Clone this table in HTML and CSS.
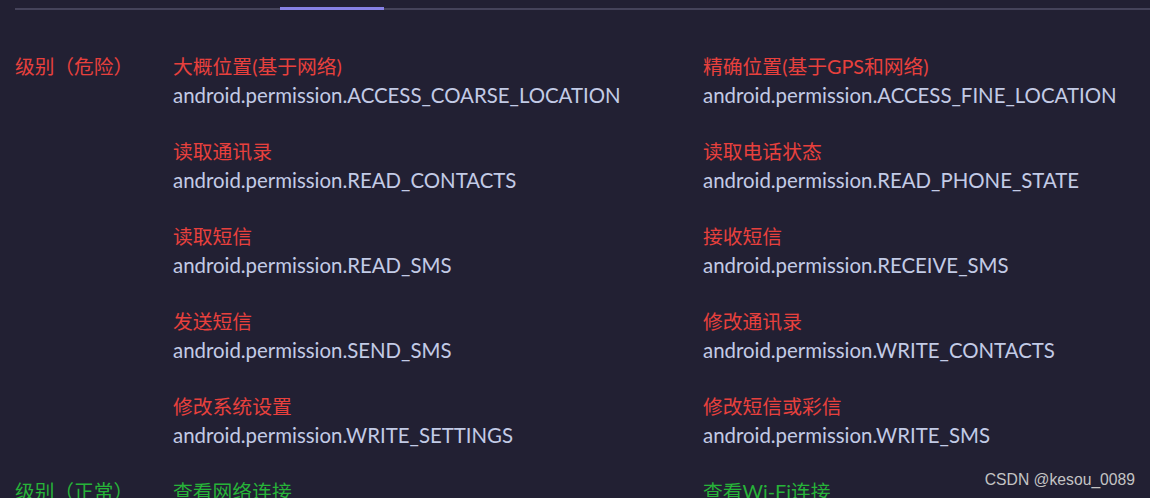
FILE: index.html
```html
<!DOCTYPE html>
<html lang="zh-CN">
<head>
  <meta charset="UTF-8">
  <meta name="viewport" content="width=device-width, initial-scale=1.0">
  <title>权限列表</title>
  <link rel="stylesheet" href="styles.css">
</head>
<body>
  <div class="tab-bar">
    <div class="tab-active"></div>
  </div>

  <div class="levels">
    <!-- 危险权限 -->
    <div class="level danger">
      <div class="level-name">级别（危险）</div>
      <div class="perm-list">
        <div class="perm">
          <div class="perm-title">大概位置(基于网络)</div>
          <div class="perm-name">android.permission.ACCESS_COARSE_LOCATION</div>
        </div>
        <div class="perm">
          <div class="perm-title">精确位置(基于GPS和网络)</div>
          <div class="perm-name">android.permission.ACCESS_FINE_LOCATION</div>
        </div>
        <div class="perm">
          <div class="perm-title">读取通讯录</div>
          <div class="perm-name">android.permission.READ_CONTACTS</div>
        </div>
        <div class="perm">
          <div class="perm-title">读取电话状态</div>
          <div class="perm-name">android.permission.READ_PHONE_STATE</div>
        </div>
        <div class="perm">
          <div class="perm-title">读取短信</div>
          <div class="perm-name">android.permission.READ_SMS</div>
        </div>
        <div class="perm">
          <div class="perm-title">接收短信</div>
          <div class="perm-name">android.permission.RECEIVE_SMS</div>
        </div>
        <div class="perm">
          <div class="perm-title">发送短信</div>
          <div class="perm-name">android.permission.SEND_SMS</div>
        </div>
        <div class="perm">
          <div class="perm-title">修改通讯录</div>
          <div class="perm-name">android.permission.WRITE_CONTACTS</div>
        </div>
        <div class="perm">
          <div class="perm-title">修改系统设置</div>
          <div class="perm-name">android.permission.WRITE_SETTINGS</div>
        </div>
        <div class="perm">
          <div class="perm-title">修改短信或彩信</div>
          <div class="perm-name">android.permission.WRITE_SMS</div>
        </div>
      </div>
    </div>

    <!-- 普通权限 -->
    <div class="level normal">
      <div class="level-name">级别（正常）</div>
      <div class="perm-list">
        <div class="perm">
          <div class="perm-title">查看网络连接</div>
          <div class="perm-name">android.permission.ACCESS_NETWORK_STATE</div>
        </div>
        <div class="perm">
          <div class="perm-title">查看Wi-Fi连接</div>
          <div class="perm-name">android.permission.ACCESS_WIFI_STATE</div>
        </div>
      </div>
    </div>
  </div>

  <div class="watermark">CSDN @kesou_0089</div>
</body>
</html>
```

FILE: styles.css
```css
body {
  margin: 0;
  padding: 0 0 0 15px;
  background-color: #222033;
  font-family: Lato, "Noto Sans CJK SC", sans-serif;
  overflow: hidden;
  height: 498px;
}
.tab-bar {
  display: flex;
  align-items: flex-end;
  height: 8px;
  border-bottom: 2px solid #45435a;
}
.tab-active {
  margin-left: 265px;
  margin-bottom: -2px;
  width: 104px;
  height: 3px;
  background-color: #8781e6;
}
.levels {
  display: flex;
  flex-direction: column;
  gap: 27px;
  margin-top: 42px;
}
.level {
  display: grid;
  grid-template-columns: 158px 1fr;
}
.level-name {
  font-size: 19.7px;
  line-height: 29px;
}
.perm-list {
  display: grid;
  grid-template-columns: 530px 1fr;
  row-gap: 27px;
}
.perm-title {
  font-size: 19.8px;
  line-height: 29px;
}
.perm-name {
  font-size: 20.4px;
  line-height: 29px;
  color: #c3cbe6;
}
.danger .level-name,
.danger .perm-title {
  color: #e8403d;
}
.normal .level-name,
.normal .perm-title {
  color: #27b339;
}
.watermark {
  position: absolute;
  right: 15px;
  top: 471px;
  font-family: "Liberation Sans", Arial, sans-serif;
  font-size: 15.7px;
  color: #c4c4c4;
}
```
